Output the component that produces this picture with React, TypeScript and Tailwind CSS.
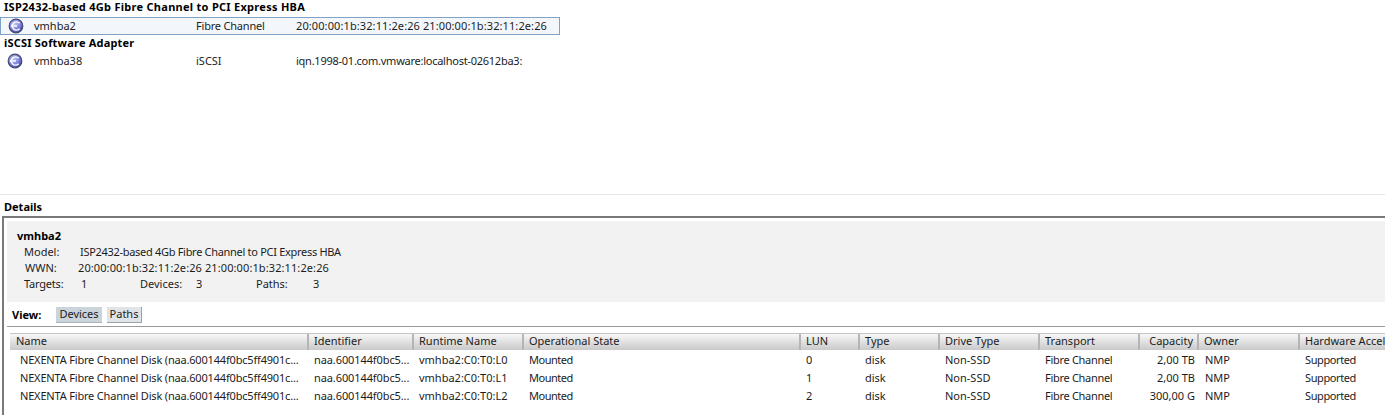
const font = { fontFamily: '"Noto Sans", "Liberation Sans", sans-serif' };

function HbaIcon() {
  return (
    <svg width="16" height="16" viewBox="0 0 16 16" className="shrink-0">
      <defs>
        <radialGradient id="hba" cx="40%" cy="35%" r="70%">
          <stop offset="0%" stopColor="#c4c8f5" />
          <stop offset="60%" stopColor="#7a7fdc" />
          <stop offset="100%" stopColor="#3c3f9a" />
        </radialGradient>
      </defs>
      <circle cx="8" cy="8" r="6.8" fill="url(#hba)" stroke="#45476e" strokeWidth="1.2" />
      <path d="M11.6 5.3A4 4 0 0 0 5.4 5.3L3.6 8l1.8 2.7A4 4 0 0 0 11.6 10.7" fill="none" stroke="#fff" strokeWidth="1.4" />
      <path d="M3.6 8h5.4" stroke="#fff" strokeWidth="1.4" />
    </svg>
  );
}

const columns = [
  { name: 'Name', cls: 'pl-[6px]' },
  { name: 'Identifier', cls: 'pl-[5px]' },
  { name: 'Runtime Name', cls: 'pl-[5px]' },
  { name: 'Operational State', cls: 'pl-[5px]' },
  { name: 'LUN', cls: 'pl-[5px]' },
  { name: 'Type', cls: 'pl-[5px]' },
  { name: 'Drive Type', cls: 'pl-[5px]' },
  { name: 'Transport', cls: 'pl-[5px]' },
  { name: 'Capacity', cls: 'justify-end pr-[4px]' },
  { name: 'Owner', cls: 'pl-[5px]' },
  { name: 'Hardware Acceleration', cls: 'pl-[5px]' },
];

const gridCols = 'grid grid-cols-[299px_105px_110px_277px_59px_80px_100px_100px_59px_101px_100px]';

const rows = [
  ['L0', '0', '2,00 TB'],
  ['L1', '1', '2,00 TB'],
  ['L2', '2', '300,00 G'],
];

export default function App() {
  return (
    <div style={font} className="h-[415px] w-[1385px] overflow-hidden bg-white text-[11px] leading-[14px] text-[#1c1c1c]">
      <div className="h-[195px] border-b border-[#e6e6e6]">
        <div className="h-[17px] whitespace-nowrap pl-[4px] font-bold tracking-[0.28px] text-black">ISP2432-based 4Gb Fibre Channel to PCI Express HBA</div>
        <div className="flex h-[18px] w-[560px] items-center border border-[#7fa3c7] bg-[#f3f7fb] pl-[7px]">
          <HbaIcon />
          <span className="ml-[10px] w-[162px]">vmhba2</span>
          <span className="w-[100px] tracking-[-0.2px]">Fibre Channel</span>
          <span className="whitespace-nowrap tracking-[0.1px]">20:00:00:1b:32:11:2e:26 21:00:00:1b:32:11:2e:26</span>
        </div>
        <div className="h-[16px] pl-[4px] pt-[1px] font-bold tracking-[0.2px] text-black">iSCSI Software Adapter</div>
        <div className="mt-[1px] flex h-[18px] items-center pl-[7px]">
          <HbaIcon />
          <span className="ml-[11px] w-[162px]">vmhba38</span>
          <span className="w-[100px]">iSCSI</span>
          <span className="whitespace-nowrap tracking-[-0.25px]">iqn.1998-01.com.vmware:localhost-02612ba3:</span>
        </div>
      </div>

      <div className="flex h-[21px] items-center pl-[4px] pt-[2px] font-bold text-black">Details</div>

      <div className="ml-[2px] h-[199px] border-l-2 border-t-2 border-[#7a7a7a] pl-[3px] pt-[3px]">
        <div className="h-[81px] bg-[#f2f2f2] pl-[10px] pt-[8px]">
          <div className="font-bold text-black">vmhba2</div>
          <div className="mt-[2px] flex pl-[7px]">
            <span className="w-[56px]">Model:</span>
            <span className="tracking-[-0.3px]">ISP2432-based 4Gb Fibre Channel to PCI Express HBA</span>
          </div>
          <div className="mt-[2px] flex pl-[8px]">
            <span className="w-[53px]">WWN:</span>
            <span className="tracking-[0.1px]">20:00:00:1b:32:11:2e:26 21:00:00:1b:32:11:2e:26</span>
          </div>
          <div className="mt-[2px] flex pl-[7px]">
            <span className="w-[57px] tracking-[-0.2px]">Targets:</span>
            <span className="w-[59px]">1</span>
            <span className="w-[56px]">Devices:</span>
            <span className="w-[60px]">3</span>
            <span className="w-[57px]">Paths:</span>
            <span>3</span>
          </div>
        </div>

        <div className="flex h-[25px] items-center border-b border-[#9a9a9a] pl-[5px] pt-[1px]">
          <span className="w-[44px] font-bold text-black">View:</span>
          <span className="flex h-[16px] w-[46px] items-center justify-center border-b border-[#a9b4bf] bg-[#cbd3db]">Devices</span>
          <span className="ml-[5px] flex h-[16px] w-[35px] items-center justify-center border-b border-r border-[#9ba3ab] bg-[#e1e4e7]">Paths</span>
        </div>

        <div className={`${gridCols} ml-[3px] mt-[6px] h-[17px] border-t border-[#c4c4c4] bg-gradient-to-b from-[#f8f8f8] to-[#c9c9c9]`}>
          {columns.map((c) => (
            <div
              key={c.name}
              className={`flex items-center overflow-hidden whitespace-nowrap border-r-2 border-[#b5b5b5] pb-[2px] ${c.cls}`}
            >
              {c.name}
            </div>
          ))}
        </div>

        <div className="ml-[3px] pt-[1px]">
          {rows.map(([lun, n, cap]) => (
            <div key={lun} className={`${gridCols} h-[18px] items-center whitespace-nowrap`}>
              <span className="pl-[10px] tracking-[-0.18px]">NEXENTA Fibre Channel Disk (naa.600144f0bc5ff4901c...</span>
              <span className="pl-[5px] tracking-[-0.1px]">naa.600144f0bc5...</span>
              <span className="pl-[5px]">vmhba2:C0:T0:{lun}</span>
              <span className="pl-[5px] tracking-[-0.5px]">Mounted</span>
              <span className="pl-[5px]">{n}</span>
              <span className="pl-[5px]">disk</span>
              <span className="pl-[5px]">Non-SSD</span>
              <span className="pl-[5px] tracking-[-0.3px]">Fibre Channel</span>
              <span className="pr-[4px] text-right">{cap}</span>
              <span className="pl-[6px]">NMP</span>
              <span className="pl-[5px] tracking-[-0.4px]">Supported</span>
            </div>
          ))}
        </div>
      </div>
    </div>
  );
}
